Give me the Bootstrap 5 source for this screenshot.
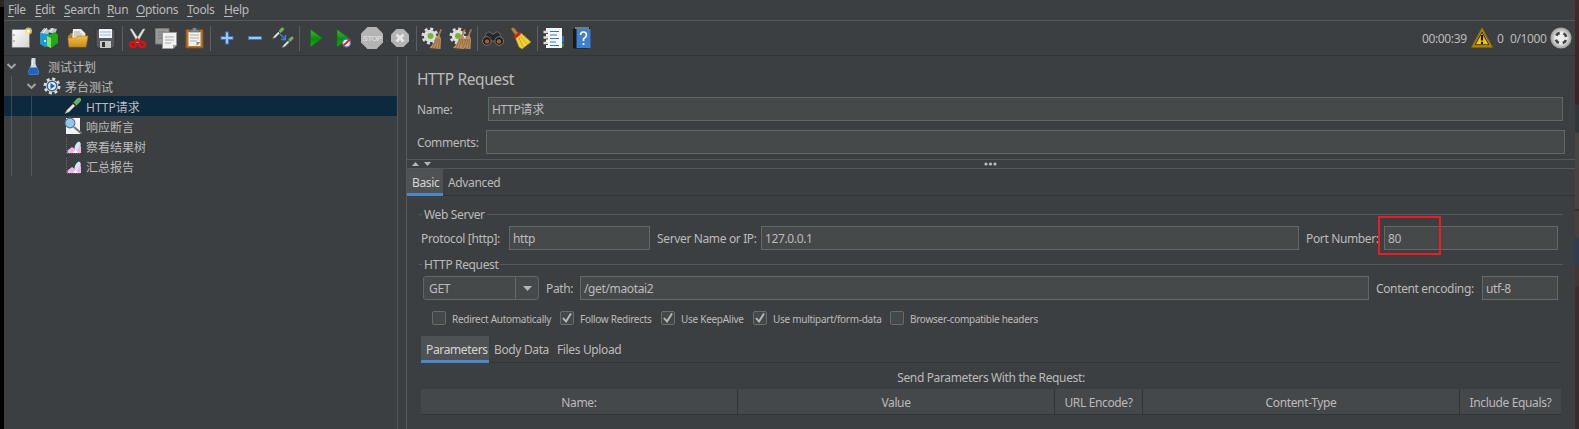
<!DOCTYPE html>
<html lang="zh-CN">
<head>
<meta charset="utf-8">
<title>JMeter</title>
<link href="https://cdn.jsdelivr.net/npm/bootstrap@5.3.0/dist/css/bootstrap.min.css" rel="stylesheet">
<script src="https://cdn.jsdelivr.net/npm/bootstrap@5.3.0/dist/js/bootstrap.bundle.min.js"></script>
<style>
:root{--panel:#3c3f41;--line:#555759;--dark:#323436;--field:#45494a;--edge:#646667;--txt:#bbbbbb;--blue:#4a88c7}
html,body{height:429px;overflow:hidden}
body{background:#000;color:var(--txt);font:12px/18px "Noto Sans","Noto Sans CJK SC",sans-serif;letter-spacing:-.36px;white-space:nowrap}
.strip-l{width:4px;background:linear-gradient(#2b2523 7px,#000 7px)}
.strip-r{width:4px;background:linear-gradient(#402b26,#3b2424 104px,#333638 105px,#333638 132px,#4b4340 133px,#4b423d 209px,#222 210px,#4b4039 211px,#4b4039 237px,#323b50 238px,#323b50 265px,#453630 266px,#453630 286px,#3b2d2a 287px,#3b2b28)}
.window{background:var(--panel)}
.menus{height:21px;border-bottom:1px solid var(--line);padding:1px 0 0 4px;gap:9px}
.menus span{flex:none}
.menus u{text-underline-offset:2px}
.m1{width:18px}.m2{width:20px}.m3{width:34px}.m4{width:20px}.m5{width:42px}.m6{width:28px}
.tools{height:35px;border-bottom:1px solid var(--dark);padding-left:3px}
.tools .tool{width:24px;height:24px;margin:0 2.14px;flex:none}
.vsep{width:1px;height:25px;margin:0 1.5px;background:#5c5e60}
.stat{padding-right:3px}
.stat span{padding-top:1px}
.s1{width:49px}.warn{margin-right:4px}.s2{width:13px}.s3{width:40px}
.tree{width:394px;border-right:1px solid var(--line);letter-spacing:0}
.tree .node{height:20px}
.tree .node svg{flex:none}
.tree .node span{padding-top:3px}
.tree .picked{background-color:#0d293e}
.guide{background:linear-gradient(#55585a,#55585a) 7px 0/1px 100% no-repeat}
.guide2{background-image:linear-gradient(#55585a,#55585a),linear-gradient(#55585a,#55585a);background-position:7px 0,27px 0;background-size:1px 100%,1px 100%;background-repeat:no-repeat}
.picked.guide2{background-image:linear-gradient(#34495a,#34495a),linear-gradient(#34495a,#34495a)}
.n1 .c1{margin-left:2px}.n1 .i1{margin:0 5px 0 8px}
.n2 .c2{margin-left:22px}.n2 .i2{margin:0 4px 0 6px}
.leaf svg{margin:0 4px 0 60px}
.splitter{width:8px}
.editor{border-left:1px solid var(--line)}
.title{font-size:15.5px;line-height:20px;margin:13px 0 8px 10px;font-weight:400;letter-spacing:-.4px}
label{padding-top:2px}
.field{border:1px solid var(--edge);background:var(--field);height:24px;line-height:23.5px;padding-left:3px}
.name-row{margin:0 12px 0 10px}.name-row label{width:71px}
.comment-row{margin:9px 10px 5px 10px}.comment-row label{width:69px}
.cjk{letter-spacing:0}
.splitbar{height:10px;border:solid var(--line);border-width:1px 0}
.tabs{border-bottom:1px solid var(--dark);height:27px}
.tabs .tab{height:27px;line-height:28px;flex:none}
.tabs .tab.on{background:#4e5254;border-bottom:3px solid var(--blue);color:#d5d5d5}
.t-basic{width:36px;padding-left:5px}.t-adv{padding-left:5px}
.t-par{width:68px;padding-left:5px}.t-body{width:63px;padding-left:5px}.t-file{padding-left:5px}
.web{padding:9px 14px 0}
.legend-row{height:18px;gap:2px;margin-left:-2px;margin-right:-2px}
.legend-row span{padding-top:2px}
.legend-row::before{content:"";width:3px;height:1px;background:var(--line)}
.legend-row::after{content:"";flex:1;height:1px;background:var(--line)}
.second{margin-top:5px;margin-bottom:3px}
.line-row{margin-right:3px}.line-row.first{margin-top:3px}
.l-proto{width:88px}.f-proto{width:141px}.l-server{width:111px;padding-left:7px}.l-port{width:85px;padding-left:7px}.f-port{width:174px}
.mark-red{position:absolute;left:-7px;top:-11px;width:63px;height:39px;border:2px solid #ec1c24}
.combo{width:116px;border-radius:3px;margin-left:2px;padding-left:5px}
.combo .arrow{width:23px;border-left:1px solid var(--edge)}
.l-path{width:41px;padding-left:7px}.l-enc{width:113px;padding-left:7px}.f-enc{width:76px}
.tick{width:14px;height:14px;border:1px solid #6b6b6b;border-radius:2px;background:#43494a;flex:none}
.opts{font-size:10px;letter-spacing:-.28px;gap:6px;margin:9px 0 9px 11px;height:18px}
.opts span:not(.tick){padding-top:1px}
.o1{width:102px}.o2{width:75px}.o3{width:66px}.o4{width:111px}
.send{height:26px;line-height:29px}
.heads{height:26px;background:#45484a;border-bottom:1px solid var(--dark);grid-template-columns:317px 317px 88px 317px 1fr}
.heads div{border-right:1px solid var(--dark);text-align:center;line-height:28px;height:25px}
.heads div:last-child{border:0}
</style>
</head>
<body class="d-flex m-0">
<svg width="0" height="0" class="position-absolute">
<defs>
<linearGradient id="gG" x1="0" y1="0" x2="0" y2="1"><stop offset="0" stop-color="#4ab53f"/><stop offset=".55" stop-color="#0c8a0c"/><stop offset="1" stop-color="#12b812"/></linearGradient>
<linearGradient id="gO" x1="0" y1="0" x2="0" y2="1"><stop offset="0" stop-color="#f2c150"/><stop offset="1" stop-color="#c98a14"/></linearGradient>
<linearGradient id="gP" x1="0" y1="0" x2="1" y2="1"><stop offset="0" stop-color="#fff"/><stop offset="1" stop-color="#d4d4d4"/></linearGradient>
<radialGradient id="gR"><stop offset=".5" stop-color="#eee"/><stop offset="1" stop-color="#999"/></radialGradient>
<g id="gear"><circle cx="9" cy="9" r="6.2" fill="#ddd"/><circle cx="9" cy="9" r="7.2" fill="none" stroke="#ddd" stroke-width="2.6" stroke-dasharray="3 2.65"/></g>
<g id="brush"><path d="M11 2L12.6 2.6 9.5 10 8 9z" fill="#a9784a"/><path d="M6 10L10 8 11.5 12 11 22 0 21Q5 16 6 10z" fill="#b98f62"/><path d="M7 12L3 21M8.5 12L6 21M10 12L9 21" stroke="#8a6238" stroke-width=".8"/></g>
<g id="pip"><path d="M1 16.5L3 13 10 6 12 8 5 15z" fill="#e4e6e2" stroke="#888" stroke-width=".6"/><path d="M9 6L13 1.5Q16 0 17 2 17.500 4 16 5L12 9z" fill="#6db25a"/><path d="M8 5L13 10" stroke="#333" stroke-width="1.400"/></g>
<g id="chart"><path d="M2.500 1V16.500H17" fill="none" stroke="#66686a" stroke-dasharray="1 1"/><path d="M3.500 16V13.500L8 10 11 12 17 9V16z" fill="#f0b4e8"/><path d="M10.500 12Q10.500 7 14.500 4.500Q17.500 5 16.500 9L13 13z" fill="#d3e4fb"/><path d="M9 16L12 12.500 14 16z" fill="#fff"/></g>
<path id="chev" d="M1.500 2L5.500 6 9.500 2" fill="none" stroke="#a4a6a8" stroke-width="1.900"/>
</defs></svg>

<div class="strip-l flex-shrink-0"></div>
<div class="window flex-grow-1 d-flex flex-column">
 <nav class="menus d-flex">
  <span class="m1"><u>F</u>ile</span><span class="m2"><u>E</u>dit</span><span class="m3"><u>S</u>earch</span><span class="m4"><u>R</u>un</span><span class="m5"><u>O</u>ptions</span><span class="m6"><u>T</u>ools</span><span class="m7"><u>H</u>elp</span>
 </nav>
 <div class="tools d-flex align-items-center">
  <svg class="tool" viewBox="0 0 24 24"><path d="M3 3.500H20.500V21.500H3z" fill="url(#gP)" stroke="#777" stroke-width=".7"/><path d="M5 8v2M5 14v2" stroke="#888"/><circle cx="19.500" cy="5" r="3.600" fill="#f3e26a" opacity=".75"/><circle cx="19.500" cy="5" r="1.600" fill="#fffce0"/></svg>
  <svg class="tool" viewBox="0 0 24 24"><path d="M3 7L12 5V20L8 21 3 18z" fill="#1b9ad6"/><path d="M3 7L7 2 12 4 11 8zM10 6L14 2 20 3 18 8z" fill="#b9c4c8"/><path d="M6 7L10 2M13 6L16 2" stroke="#fff"/><path d="M10 10L18 6 21 9V17L14 22 10 20z" fill="#25a818"/><path d="M10 10L14 12V22L10 20z" fill="#85e36b"/><circle cx="8" cy="15" r="1" fill="#fff"/></svg>
  <svg class="tool" viewBox="0 0 24 24"><path d="M2 10L5 7H20V20H3z" fill="#b67f1c"/><path d="M7 3H15L19 7V15H6z" fill="#eee"/><path d="M8 6H14M8 8H16M8 10H16" stroke="#aaa"/><path d="M2 12H10L12 10H22L20 21H3z" fill="url(#gO)" stroke="#b67c12" stroke-width=".6"/></svg>
  <svg class="tool" viewBox="0 0 24 24"><path d="M2 3H21V20L19 22H4L2 20z" fill="#55595c" stroke="#303234"/><path d="M5 3H18V12H5z" fill="#f2f5fa"/><path d="M6 6H17M6 9H17" stroke="#9bb5df"/><path d="M6 15H17V22H6z" fill="#c8c8c8"/><path d="M8 16H11V21H8z" fill="#333"/></svg>
  <i class="vsep"></i>
  <svg class="tool" viewBox="0 0 24 24"><path d="M4 3L6 3 14 15 12 17zM19 3L17 3 9 15 11 17z" fill="#e6e6e6" stroke="#aaa" stroke-width=".5"/><g fill="none" stroke="#d61414" stroke-width="2.600"><ellipse cx="7" cy="18.500" rx="2.900" ry="2.500"/><ellipse cx="16" cy="18.500" rx="2.900" ry="2.500"/><path d="M8.500 16L11.500 14 14.500 16"/></g></svg>
  <svg class="tool" viewBox="0 0 24 24"><path d="M1.500 2.500H15V18H1.500z" fill="#999" stroke="#777"/><path d="M4 6H12M4 9H12M4 12H9" stroke="#777"/><path d="M8.500 6.500H22.500V19L19 22.500H8.500z" fill="#f1f1f1" stroke="#999"/><path d="M11 11H20M11 14H20M11 17H17" stroke="#aaa"/><path d="M19 22V19H22z" fill="#999"/></svg>
  <svg class="tool" viewBox="0 0 24 24"><path d="M3 3.500H20V22H3z" fill="#b5752a" stroke="#824d16"/><path d="M5.500 6H17.500V20H5.500z" fill="#f2f2ee"/><path d="M7 9H16M7 12H16M7 15H14" stroke="#aaa"/><path d="M6.500 6V4H9.500V2H13.500V4H16.500V6z" fill="#8b8d8f" stroke="#555" stroke-width=".6"/><path d="M13.500 20V16H17.500z" fill="#888"/></svg>
  <i class="vsep"></i>
  <svg class="tool" viewBox="0 0 24 24"><path d="M12 5.500V18.500M5.500 12H18.500" stroke="#3f76b8" stroke-width="4"/><path d="M12 6.500V17.500M6.500 12H17.500" stroke="#9fc8f1" stroke-width="2"/></svg>
  <svg class="tool" viewBox="0 0 24 24"><path d="M5 12H19" stroke="#3f76b8" stroke-width="4"/><path d="M6 12H18" stroke="#9fc8f1" stroke-width="2"/></svg>
  <svg class="tool" viewBox="0 0 24 24"><use href="#pip" transform="translate(1 1) scale(.7)"/><use href="#pip" transform="translate(10.500 10) scale(.7)"/><path d="M9 8L14 13M14.500 9V13.500H10" fill="none" stroke="#3a7fe0" stroke-width="1.400"/></svg>
  <i class="vsep"></i>
  <svg class="tool" viewBox="0 0 24 24"><path d="M6.500 3.500L18.500 12 6.500 21z" fill="url(#gG)" stroke="#0a6d0a" stroke-width=".6"/></svg>
  <svg class="tool" viewBox="0 0 24 24"><path d="M5 3.500L17 12 5 21z" fill="url(#gG)" stroke="#0a6d0a" stroke-width=".6"/><circle cx="14.500" cy="17" r="4" fill="#e9f0fa" stroke="#3c7ac4" stroke-width="1.300"/><path d="M11 20L18.500 13" stroke="#e02020" stroke-width="1.800"/></svg>
  <svg class="tool" viewBox="0 0 24 24"><path d="M7.500 1H16.500L23 7.500V16.500L16.500 23H7.500L1 16.500V7.500z" fill="#b4b4b4"/><text x="2.500" y="15" font-family="Liberation Sans" font-weight="bold" font-size="8" fill="#d8d8d8" style="letter-spacing:-.7px">STOP</text></svg>
  <svg class="tool" viewBox="0 0 24 24"><path d="M8.500 3H15.500L21 8.500V15.500L15.500 21H8.500L3 15.500V8.500z" fill="#b4b4b4"/><path d="M8.500 8.500L15.500 15.500M15.500 8.500L8.500 15.500" stroke="#e6e6e6" stroke-width="3"/></svg>
  <i class="vsep"></i>
  <svg class="tool" viewBox="0 0 24 24"><use href="#gear" x="0" y="1"/><circle cx="9.500" cy="10" r="3" fill="#72b82f"/><use href="#brush" x="8.500" y="1"/></svg>
  <svg class="tool" viewBox="0 0 24 24"><use href="#gear" x="0" y="1"/><circle cx="9" cy="10" r="3" fill="#72b82f"/><use href="#brush" x="4" y="1"/><use href="#brush" x="10.500" y="1"/></svg>
  <i class="vsep"></i>
  <svg class="tool" viewBox="0 0 24 24"><path d="M5 8Q6 5 9 6L11 8H13L15 6Q18 5 19 8L22 15H2z" fill="#25282a" stroke="#777" stroke-width=".8"/><circle cx="5.800" cy="15" r="4.300" fill="#1b1b1b" stroke="#75787b"/><circle cx="18.200" cy="15" r="4.300" fill="#1b1b1b" stroke="#75787b"/><circle cx="6" cy="15.500" r="2.300" fill="#a65b2c"/><circle cx="18" cy="15.500" r="2.300" fill="#a65b2c"/></svg>
  <svg class="tool" viewBox="0 0 24 24"><path d="M2 3Q4 0 6 3L10 8 7 10z" fill="#b7802c"/><path d="M6 11L12 7 22 16 13 23 10 21z" fill="#f0d234" stroke="#a98c14" stroke-width=".6"/><path d="M10 12L14 21M12 11L18 18" stroke="#c8a51e"/><path d="M5.500 11.500L11 7" stroke="#d52020" stroke-width="3"/></svg>
  <i class="vsep"></i>
  <svg class="tool" viewBox="0 0 24 24"><path d="M20 10H22V16H20z" fill="#2a6fd6"/><path d="M20 17H22V21H20z" fill="#1c9b28"/><path d="M4 2H20V22H4z" fill="#fafafa"/><path d="M8 5.500H17M8 9H15M8 12.500H17M8 16H14M8 19.500H17" stroke="#2f72d4" stroke-width="1.200"/><path d="M1.500 6H6M1.500 11.500H6M1.500 17H6" stroke="#ddd" stroke-width="2.500"/><path d="M4 7.500H6M4 13H6M4 18.500H6" stroke="#444"/></svg>
  <svg class="tool" viewBox="0 0 24 24"><path d="M3 3L6 1H20V21L18 22.500H3z" fill="#17191c"/><path d="M6.500 3H20.500V22H6.500z" fill="#3f7fd0"/><path d="M5 2H19" stroke="#ddd"/><path d="M10.500 9Q10.500 6 13.500 6T16.500 9Q16.500 11 13.500 13V15M13.500 17V19" fill="none" stroke="#fff" stroke-width="1.700"/></svg>
  <div class="ms-auto d-flex align-items-center stat">
   <span class="s1">00:00:39</span>
   <svg width="22" height="22" viewBox="0 0 22 22" class="warn"><path d="M11 1.500L21 20H1z" fill="#f4c90b" stroke="#8e7206" stroke-width="1.500" stroke-linejoin="round"/><path d="M11 5L18 17.800H4z" fill="none" stroke="#3b3408" stroke-width="1.200"/><path d="M11 8V13.500M11 14.800V17" stroke="#111" stroke-width="2.200"/></svg>
   <span class="s2">0</span><span class="s3">0/1000</span>
   <svg width="22" height="22" viewBox="0 0 22 22"><circle cx="11" cy="11" r="10.600" fill="url(#gR)"/><circle cx="11" cy="11" r="5.300" fill="none" stroke="#444" stroke-width="2.600" stroke-dasharray="4.320 4" stroke-dashoffset="-2"/></svg>
  </div>
 </div>
 <div class="d-flex flex-grow-1">
  <aside class="tree flex-shrink-0">
   <div class="node d-flex align-items-center n1"><svg width="11" height="8" class="c1"><use href="#chev"/></svg><svg width="18" height="18" class="i1"><path d="M6.500 1H10.500V7L14 15Q14.500 17.500 12 17.500H5Q2.500 17.500 3 15L6.500 7z" fill="#cfd9e2"/><path d="M5 10.500H12L14 15.500Q14 17.500 12 17.500H5Q2.500 17.500 3 15z" fill="#1766c4"/><path d="M7 3V8" stroke="#fff"/></svg><span>测试计划</span></div>
   <div class="node d-flex align-items-center guide n2"><svg width="11" height="8" class="c2"><use href="#chev"/></svg><svg width="18" height="18" class="i2"><use href="#gear"/><circle cx="9" cy="9" r="4.700" fill="#e3edfa" stroke="#3b5f91" stroke-width="1.500"/><path d="M7.500 6L12 9 7.500 12z" fill="#1f5bab"/></svg><span>茅台测试</span></div>
   <div class="node d-flex align-items-center guide2 picked leaf"><svg width="18" height="18"><use href="#pip"/></svg><span>HTTP请求</span></div>
   <div class="node d-flex align-items-center guide2 leaf"><svg width="18" height="18"><path d="M2 1H16V17H2z" fill="#f4f4f4"/><path d="M10 10L17.500 16.500" stroke="#777" stroke-width="2.200"/><circle cx="6" cy="6" r="4.900" fill="#93c7ea" stroke="#4f7288" stroke-width="1.100"/></svg><span>响应断言</span></div>
   <div class="node d-flex align-items-center guide2 leaf"><svg width="18" height="18"><use href="#chart"/></svg><span>察看结果树</span></div>
   <div class="node d-flex align-items-center guide2 leaf"><svg width="18" height="18"><use href="#chart"/></svg><span>汇总报告</span></div>
  </aside>
  <div class="splitter flex-shrink-0"></div>
  <main class="editor flex-grow-1 d-flex flex-column">
   <h1 class="title">HTTP Request</h1>
   <div class="d-flex align-items-center name-row"><label>Name:</label><div class="field flex-grow-1">HTTP<span class="cjk">请求</span></div></div>
   <div class="d-flex align-items-center comment-row"><label>Comments:</label><div class="field flex-grow-1"></div></div>
   <div class="splitbar d-flex align-items-center"><svg width="600" height="8"><path d="M5 6L8.500 2 12 6zM17 2H24L20.500 6z" fill="#b4b6b8"/><g fill="#bbb"><circle cx="579" cy="4" r="1.600"/><circle cx="583.500" cy="4" r="1.600"/><circle cx="588" cy="4" r="1.600"/></g></svg></div>
   <div class="tabs d-flex"><div class="tab on t-basic">Basic</div><div class="tab t-adv">Advanced</div></div>
   <section class="web">
    <div class="legend-row d-flex align-items-center"><span>Web Server</span></div>
    <div class="d-flex align-items-center line-row first">
     <label class="l-proto">Protocol [http]:</label><div class="field f-proto">http</div>
     <label class="l-server">Server Name or IP:</label><div class="field flex-grow-1">127.0.0.1</div>
     <label class="l-port">Port Number:</label><div class="field f-port position-relative">80<div class="mark-red"></div></div>
    </div>
    <div class="legend-row d-flex align-items-center second"><span>HTTP Request</span></div>
    <div class="d-flex align-items-center line-row">
     <div class="field combo d-flex"><span class="flex-grow-1">GET</span><span class="arrow d-flex align-items-center justify-content-center"><svg width="9" height="5"><path d="M0 0H9L4.500 5z" fill="#b4b6b8"/></svg></span></div>
     <label class="l-path">Path:</label><div class="field flex-grow-1">/get/maotai2</div>
     <label class="l-enc">Content encoding:</label><div class="field f-enc">utf-8</div>
    </div>
    <div class="opts d-flex align-items-center">
     <span class="tick"></span><span class="o1">Redirect Automatically</span>
     <svg class="tick" viewBox="0 0 12 12"><path d="M2 6L5 9.500 10 1.500" fill="none" stroke="#bbb" stroke-width="1.900"/></svg><span class="o2">Follow Redirects</span>
     <svg class="tick" viewBox="0 0 12 12"><path d="M2 6L5 9.500 10 1.500" fill="none" stroke="#bbb" stroke-width="1.900"/></svg><span class="o3">Use KeepAlive</span>
     <svg class="tick" viewBox="0 0 12 12"><path d="M2 6L5 9.500 10 1.500" fill="none" stroke="#bbb" stroke-width="1.900"/></svg><span class="o4">Use multipart/form-data</span>
     <span class="tick"></span><span class="o5">Browser-compatible headers</span>
    </div>
    <div class="tabs d-flex"><div class="tab on t-par">Parameters</div><div class="tab t-body">Body Data</div><div class="tab t-file">Files Upload</div></div>
    <div class="send text-center">Send Parameters With the Request:</div>
    <div class="heads d-grid"><div>Name:</div><div>Value</div><div>URL Encode?</div><div>Content-Type</div><div>Include Equals?</div></div>
   </section>
  </main>
 </div>
</div>
<div class="strip-r flex-shrink-0"></div>
</body>
</html>
